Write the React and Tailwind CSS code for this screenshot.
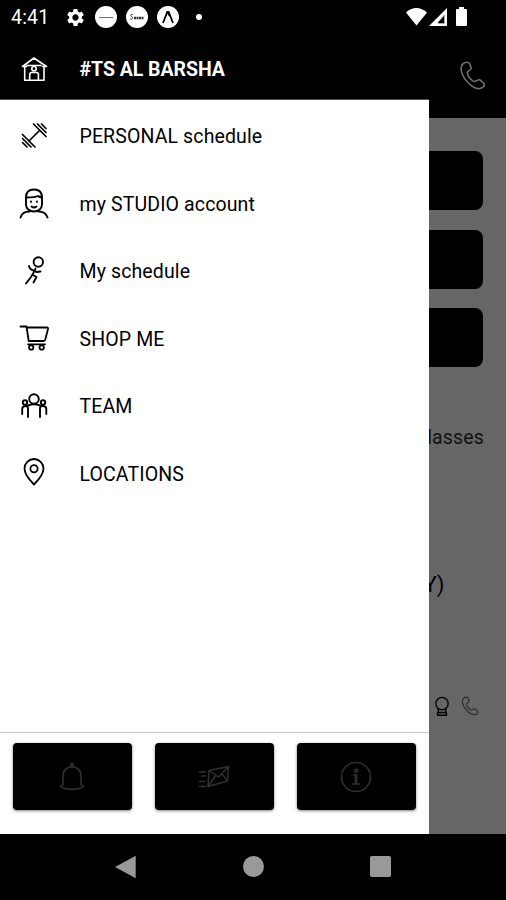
import { MdSettings } from "react-icons/md";

const Icon = ({ children, className = "size-8", width = 1.6 }) => (
  <svg
    className={`${className} shrink-0`}
    viewBox="0 0 32 32"
    fill="none"
    stroke="currentColor"
    strokeWidth={width}
    strokeLinecap="round"
    strokeLinejoin="round"
  >
    {children}
  </svg>
);

const HomeIcon = () => (
  <Icon>
    <path d="M4.5 13.5L16 5l12.5 8.5M4.5 13.5h4M24.5 13.5h4M6.7 14v13.3h19.3V14M9 12.5h14" />
    <circle cx="16" cy="15.7" r="2.2" />
    <path d="M11.7 27v-5.5c0-1.5 1-2 2-2h4.7c1 0 2 .5 2 2V27" />
  </Icon>
);

const DumbbellIcon = () => (
  <Icon width={1.7}>
    <path d="M11 21L21.5 10.5" />
    <path d="M4.500 14.500l12.500 12.500M4.500 18.500l8.500 8.500M4.500 22.500l4.500 4.500" />
    <path d="M15.500 4l12.500 12.500M19.500 4l8.500 8.500M23.500 4l4.500 4.500" />
  </Icon>
);

const UserIcon = () => (
  <Icon width={1.9}>
    <path d="M8 10.500C8 5 11 2.500 16 2.500s8 2.500 8 8V17.500c0 4-3.500 7-8 7S8 21.500 8 17.500z" />
    <path d="M8.200 10.500c5 0 9-.2 12-1.500 1 .8 2 1.300 3.600 1.500" />
    <path d="M2.500 30.500c1.200-4 4-6 9-6M29.500 30.500c-1.200-4-4-6-9-6" />
    <path d="M13 14.500v.4M19 14.500v.4M13.500 19.500c1.500 1.300 3.500 1.300 5 0" />
  </Icon>
);

const RunnerIcon = () => (
  <Icon width={1.900}>
    <circle cx="20.300" cy="7" r="4.700" />
    <path d="M11 11c.5 2.500 2.500 4 4.700 4.700l3.300 1.300 3.500-.5M17.500 13.500c-1.500 4-3 6-4.500 8.500l-5 6.500" />
    <path d="M15 20l3.500 2-3 5.500" />
  </Icon>
);

const CartIcon = () => (
  <Icon width={1.800}>
    <path d="M2.500 4.500h6l2.200 14.500h14.800c1 0 1.500-.5 1.800-1.500L30 7c.2-1-.3-1.500-1-1.500H9M10 22.300h17" />
    <circle cx="13.200" cy="25.500" r="2.200" />
    <circle cx="23.700" cy="25.500" r="2.200" />
  </Icon>
);

const TeamIcon = () => (
  <Icon width={1.900}>
    <circle cx="16" cy="9" r="4.800" />
    <path d="M10 27V18.500c0-1.500-.5-2.500-2-2.500 2.500-.5 4-1.800 8-1.800s5.500 1.300 8 1.800c-1.500 0-2 1-2 2.500V27" />
    <circle cx="7" cy="12.500" r="2.200" />
    <circle cx="25" cy="12.500" r="2.200" />
    <path d="M4.200 24V19c0-1.700.8-3 3.800-3M28.300 24V19c0-1.700-.8-3-3.800-3" />
  </Icon>
);

const PinIcon = () => (
  <Icon width={1.800}>
    <path d="M16 27.500C10 21.500 6.500 16.500 6.500 11.500a9.500 9.500 0 0 1 19 0c0 5-3.500 10-9.500 16z" />
    <circle cx="16" cy="11.700" r="3.600" />
  </Icon>
);

const PhoneIcon = ({ className, width = 1.5 }) => (
  <Icon className={className} width={width}>
    <path d="M7 4.500c1.800-1.800 5-1.800 6.300 0l1.500 4.500c0 1.800-3.800 2.500-3.800 4.500 0 3 4.300 8 6.800 8.300 2 0 3.300-2.500 5.500-1.500l3.500 3.200c2 2.500-1 5-4.500 5.300C15 28.500 6 18.500 5 10.500c-.2-2 0-4.300 2-6z" />
  </Icon>
);

const BellIcon = () => (
  <Icon width={1.600}>
    <circle cx="16" cy="4" r="1.500" />
    <path d="M7 24V14.500c0-5.500 4-8.500 9-8.500s9 3 9 8.500V24M7 24c-3 .3-3 2.300 0 3 5 1.500 13 1.500 18 0 3-.7 3-2.700 0-3" />
  </Icon>
);

const MailIcon = () => (
  <Icon width={1.500}>
    <path d="M11 9.500L30.500 5.500 29.500 20 10 25.500zM11 9.500l9.500 6.500 10-10.500M10 25.500l7.500-11M29.500 20l-6-7.500" />
    <path d="M1.500 11h6M3.500 15h4M1.500 20.500h5M1.500 25.500h6" />
  </Icon>
);

const InfoIcon = () => (
  <Icon width={1.600}>
    <circle cx="16" cy="16" r="14.500" />
    <circle cx="16.200" cy="9.800" r="1.600" />
    <path d="M13.500 14h3v9M13 23h6.500M15.500 14.500v8" />
  </Icon>
);

const BadgeIcon = () => (
  <Icon className="h-[22px] w-[22px]" width={2}>
    <circle cx="16" cy="12.500" r="9" />
    <path d="M10.500 20v6M21.500 20v6M10 25.500h12M9.500 29.500h13M9.500 26v3M22.500 26v3" />
  </Icon>
);

const menu = [
  { label: "PERSONAL schedule", icon: DumbbellIcon },
  { label: "my STUDIO account", icon: UserIcon },
  { label: "My schedule", icon: RunnerIcon },
  { label: "SHOP ME", icon: CartIcon },
  { label: "TEAM", icon: TeamIcon },
  { label: "LOCATIONS", icon: PinIcon },
];

const StatusBar = () => (
  <div className="flex h-9 shrink-0 items-center bg-black pb-[2px] pl-[11px] pr-[37px] text-white">
    <span className="w-[54px] pt-px text-[19.5px] leading-none tracking-[0.2px]">4:41</span>
    <MdSettings className="size-[21px]" />
    <span className="ml-[9px] flex size-[22px] items-center justify-center rounded-full bg-white">
      <span className="h-px w-[14px] bg-gray-500" />
    </span>
    <span className="ml-[9px] flex size-[22px] items-center justify-center rounded-full bg-white">
      <svg className="h-[8px] w-[16px]" viewBox="0 0 16 8" fill="none" stroke="#333">
        <path d="M4 2c-2-2-3 1-1 2s-1 3-2 2" />
        <path d="M5 5h10" strokeWidth="2.500" strokeDasharray="2 .5" />
      </svg>
    </span>
    <span className="ml-[9px] flex size-[22px] items-center justify-center rounded-full bg-white">
      <svg className="size-[14px]" viewBox="0 0 14 14" fill="none" stroke="black" strokeWidth="1.800">
        <path d="M2 13L6.300 2h1.400L12 13M7 2l1.500 4" />
      </svg>
    </span>
    <span className="ml-[17px] size-[6px] rounded-full bg-white" />
    <svg className="ml-auto h-[20px] w-[64px]" viewBox="0 0 64 20">
      <path d="M1 5.500C7-.5 15.500-.5 22 5.500L11.500 18.500z" fill="white" />
      <path d="M42 1v18H24z" fill="white" />
      <path d="M39.500 8v8.500h-6.500V15z" fill="black" stroke="#aaa" />
      <path d="M54 2V0h5v2h2q1 0 1 1v15q0 1-1 1H52q-1 0-1-1V3q0-1 1-1z" fill="white" />
    </svg>
  </div>
);

const Drawer = () => (
  <aside className="flex w-[428.5px] shrink-0 flex-col bg-white">
    <div className="flex h-16 shrink-0 items-center gap-[29.5px] border-b border-[#555] bg-black pl-[18px] pt-[3px] text-white">
      <HomeIcon />
      <span className="pt-px text-[19.5px] font-bold tracking-[-0.04px]">#TS AL BARSHA</span>
    </div>
    <nav className="flex flex-col pt-[2px] text-black">
      {menu.map(({ label, icon: ItemIcon }) => (
        <a key={label} className="flex h-[67.5px] items-center gap-[29.5px] pl-[18px]">
          <ItemIcon />
          <span className="pt-[2px] text-[19.5px] tracking-[0.12px]">{label}</span>
        </a>
      ))}
    </nav>
    <div className="mt-auto flex h-[101.5px] shrink-0 gap-[23px] border-t border-[#ccc] px-[12.5px] pt-[10px]">
      {[BellIcon, MailIcon, InfoIcon].map((ButtonIcon, i) => (
        <button
          key={i}
          className="flex h-[67px] flex-1 items-center justify-center rounded-[4px] bg-black text-[#303030] shadow-[0_1px_3px_rgba(0,0,0,0.5)]"
        >
          <ButtonIcon />
        </button>
      ))}
    </div>
  </aside>
);

const Backdrop = () => (
  <main className="flex min-w-0 flex-1 flex-col overflow-hidden bg-[#666] text-black">
    <div className="flex h-[82px] shrink-0 justify-end bg-black pr-[17px] pt-[22.5px] text-[#707070]">
      <PhoneIcon className="size-[33px]" />
    </div>
    <div className="flex flex-col gap-[19.500px] pr-[23px] pt-[33px]">
      <div className="h-[59px] rounded-r-[8px] bg-black" />
      <div className="h-[59px] rounded-r-[8px] bg-black" />
      <div className="h-[59px] rounded-r-[8px] bg-black" />
    </div>
    <div className="mt-[56px] flex h-[29px] items-center justify-end pr-[22px]">
      <span className="text-[19.500px] tracking-[0.15px] text-[#111]">lasses</span>
    </div>
    <div className="mt-[117px] flex h-[30px] items-center justify-end pr-[61.5px]">
      <span className="text-[22px]">Y)</span>
    </div>
    <div className="mt-[96px] flex gap-[6px] pl-[2.500px]">
      <BadgeIcon />
      <PhoneIcon className="h-[22px] w-[22px] text-[#2a2a2a]" width={1.600} />
    </div>
  </main>
);

const App = () => (
  <div className="flex h-[900px] w-[506px] flex-col overflow-hidden bg-black font-['Roboto',sans-serif]">
    <StatusBar />
    <div className="flex h-[797.5px] shrink-0">
      <Drawer />
      <Backdrop />
    </div>
    <div className="flex flex-1 items-center justify-between bg-black pl-[114px] pr-[115.5px] text-[#999]">
      <svg className="h-[24px] w-[23px]" viewBox="0 0 23 24" fill="currentColor">
        <path d="M1 12L21.700 .7V23.300z" />
      </svg>
      <span className="size-[21px] rounded-full bg-[#999]" />
      <span className="size-[21px] rounded-[2px] bg-[#999]" />
    </div>
  </div>
);

export default App;
